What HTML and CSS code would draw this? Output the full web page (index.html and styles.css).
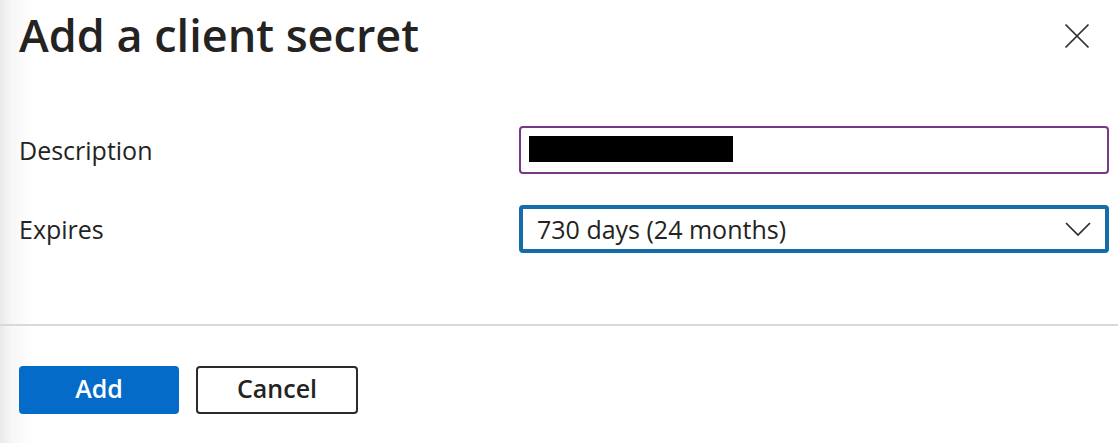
FILE: index.html
```html
<!DOCTYPE html>
<html lang="en">
<head>
<meta charset="utf-8">
<meta name="viewport" content="width=device-width, initial-scale=1">
<title>Add a client secret</title>
<link rel="stylesheet" href="styles.css">
</head>
<body>
<form class="panel">
  <header class="panel-header">
    <h1 class="title">Add a client secret</h1>
    <button class="close" type="button" aria-label="Close">
      <svg class="close-icon" viewBox="0 0 26 26" aria-hidden="true"><path d="M1.5 1.5L24.5 24.5M24.5 1.5L1.5 24.5"/></svg>
    </button>
  </header>
  <div class="fields">
    <div class="field">
      <label class="label" for="description">Description</label>
      <div class="control">
        <input class="input" id="description" type="text">
        <span class="redaction"></span>
      </div>
    </div>
    <div class="field">
      <label class="label" for="expires">Expires</label>
      <div class="control">
        <select class="select" id="expires">
          <option>730 days (24 months)</option>
        </select>
        <svg class="chevron" viewBox="0 0 26 14" aria-hidden="true"><path d="M1 1L13 13L25 1"/></svg>
      </div>
    </div>
  </div>
  <footer class="actions">
    <button class="button primary" type="button">Add</button>
    <button class="button secondary" type="button">Cancel</button>
  </footer>
</form>
</body>
</html>
```
FILE: styles.css
```css
* {
  box-sizing: border-box;
}

body {
  margin: 0;
  background: #fff;
  color: #242322;
  font-family: "Open Sans", "Noto Sans", sans-serif;
}

.panel {
  min-height: 100vh;
  background: linear-gradient(to right, #e9e9e9, #f7f7f7 12px, #fdfdfd 28px, #fff 36px);
}

.panel-header {
  display: flex;
  align-items: center;
  justify-content: space-between;
  height: 72px;
  padding: 0 28px 0 19px;
}

.title {
  margin: 0;
  padding-bottom: 2px;
  font-size: 45px;
  line-height: 64px;
  font-weight: 700;
  font-weight: 640;
}

.close {
  display: flex;
  padding: 0;
  border: 0;
  background: none;
}

.close-icon,
.chevron {
  width: 26px;
  fill: none;
  stroke: #2b2b2b;
  stroke-width: 1.7;
}

.close-icon {
  height: 26px;
}

.fields {
  display: grid;
  gap: 31px;
  padding: 54px 9px 71px 19px;
  border-bottom: 2px solid #d9d9d9;
}

.field {
  display: grid;
  grid-template-columns: 500px 1fr;
  align-items: center;
}

.label {
  font-size: 25px;
  line-height: 36px;
}

.control {
  position: relative;
}

.input,
.select {
  display: block;
  width: 100%;
  height: 48px;
  border-radius: 4px;
  background: #fff;
  color: inherit;
  font: 25px "Open Sans", "Noto Sans", sans-serif;
}

.input {
  padding: 0 8px;
  border: 2px solid #773886;
}

.select {
  appearance: none;
  padding: 0 56px 0 14px;
  border: 4px solid #146cab;
  outline: 0;
}

.redaction {
  position: absolute;
  top: 10px;
  left: 10px;
  width: 204px;
  height: 26px;
  background: #000;
}

.chevron {
  position: absolute;
  top: 17px;
  right: 18px;
  height: 14px;
  pointer-events: none;
}

.actions {
  display: flex;
  gap: 17px;
  padding: 40px 19px 28px;
}

.button {
  height: 48px;
  padding: 0 12px 4px;
  border-radius: 4px;
  font: 600 25px "Open Sans", "Noto Sans", sans-serif;
}

.primary {
  width: 160px;
  border: 0;
  background: #046bc9;
  color: #fff;
}

.secondary {
  width: 162px;
  border: 2px solid #2b2b2b;
  background: #fff;
  color: inherit;
}
```
